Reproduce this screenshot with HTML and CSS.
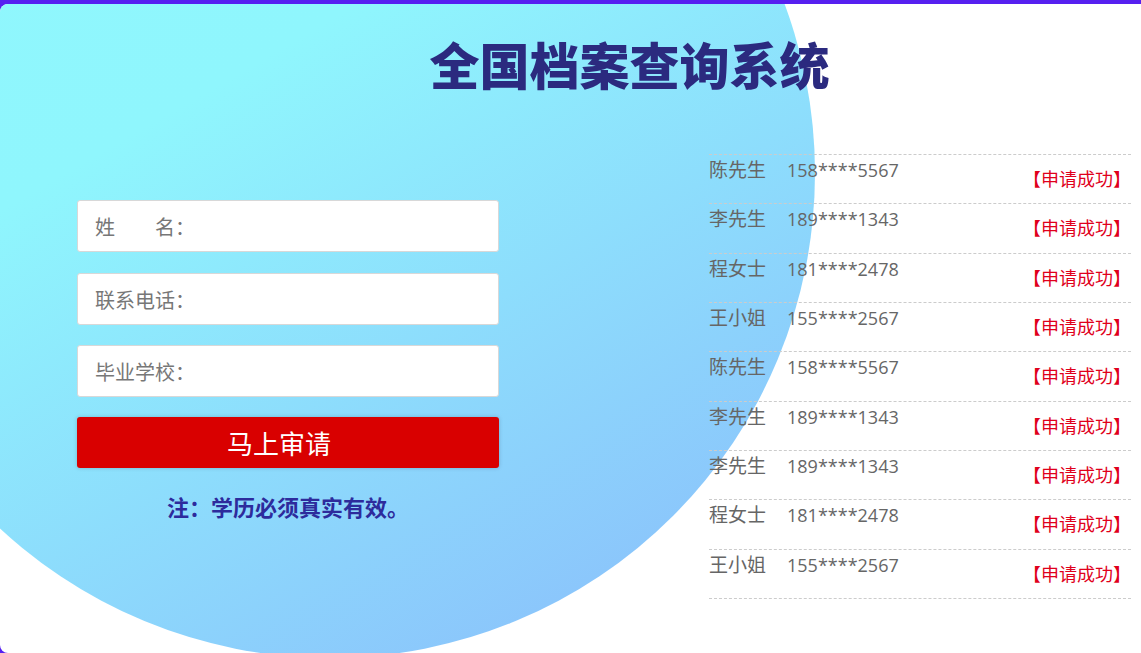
FILE: index.html
```html
<!DOCTYPE html>
<html lang="zh-CN">
<head>
<meta charset="utf-8">
<title>全国档案查询系统</title>
<link rel="stylesheet" href="styles.css">
</head>
<body>
<div class="panel">
  <div class="bubble"></div>
  <h1 class="title">全国档案查询系统</h1>
  <div class="main">
    <form class="form">
      <input class="field" type="text" placeholder="姓　　名：">
      <input class="field" type="text" placeholder="联系电话：">
      <input class="field" type="text" placeholder="毕业学校：">
      <button class="submit" type="button">马上审请</button>
      <p class="note">注：学历必须真实有效。</p>
    </form>
    <ul class="list">
      <li class="row"><span class="who"><span class="name">陈先生</span><span class="phone">158****5567</span></span><span class="status">【申请成功】</span></li>
      <li class="row"><span class="who"><span class="name">李先生</span><span class="phone">189****1343</span></span><span class="status">【申请成功】</span></li>
      <li class="row"><span class="who"><span class="name">程女士</span><span class="phone">181****2478</span></span><span class="status">【申请成功】</span></li>
      <li class="row"><span class="who"><span class="name">王小姐</span><span class="phone">155****2567</span></span><span class="status">【申请成功】</span></li>
      <li class="row"><span class="who"><span class="name">陈先生</span><span class="phone">158****5567</span></span><span class="status">【申请成功】</span></li>
      <li class="row"><span class="who"><span class="name">李先生</span><span class="phone">189****1343</span></span><span class="status">【申请成功】</span></li>
      <li class="row"><span class="who"><span class="name">李先生</span><span class="phone">189****1343</span></span><span class="status">【申请成功】</span></li>
      <li class="row"><span class="who"><span class="name">程女士</span><span class="phone">181****2478</span></span><span class="status">【申请成功】</span></li>
      <li class="row"><span class="who"><span class="name">王小姐</span><span class="phone">155****2567</span></span><span class="status">【申请成功】</span></li>
    </ul>
  </div>
</div>
</body>
</html>
```

FILE: styles.css
```css
html, body {
  margin: 0;
  padding: 0;
  height: 653px;
  overflow: hidden;
  background: #561ff0;
  font-family: "Noto Sans CJK SC", sans-serif;
}

.panel {
  position: relative;
  margin-top: 4px;
  height: 649px;
  background: #ffffff;
  border-radius: 8px 0 0 8px;
  overflow: hidden;
}

.bubble {
  position: absolute;
  left: -155px;
  top: -316px;
  width: 970px;
  height: 970px;
  border-radius: 50%;
  background: linear-gradient(150deg, #90f8fd 0%, #8ff6fd 40%, #8ab9fb 100%);
}

.title {
  position: relative;
  margin: 0;
  padding: 29px 0 0 118px;
  text-align: center;
  font-size: 50px;
  line-height: 60px;
  font-weight: 900;
  color: #2b2a7f;
}

.main {
  position: relative;
  display: flex;
  padding-top: 61px;
}

.form {
  display: flex;
  flex-direction: column;
  gap: 20px;
  width: 422px;
  margin: 0 0 0 77px;
  padding-top: 46px;
}

.field {
  box-sizing: border-box;
  height: 52px;
  width: 100%;
  margin: 0;
  padding: 0 17px;
  border: 1px solid #d8d8d8;
  border-radius: 3px;
  background: #ffffff;
  font-family: "Noto Sans CJK SC", sans-serif;
  font-size: 20px;
  color: #555555;
  outline: none;
}

.field:first-child {
  margin-bottom: 1px;
}

.field::placeholder {
  color: #777777;
}

.submit {
  height: 51px;
  width: 100%;
  margin: 0;
  padding: 0 18px 0 0;
  border: none;
  border-radius: 3px;
  background: #d90000;
  color: #ffffff;
  font-family: "Noto Sans CJK SC", sans-serif;
  font-size: 26px;
  box-shadow: 0 0 4px rgba(0, 0, 0, 0.18);
}

.note {
  margin: 3px 0 0;
  text-align: center;
  font-size: 22px;
  line-height: 30px;
  font-weight: 700;
  color: #2d2b9c;
}

.list {
  list-style: none;
  margin: 0 0 0 210px;
  padding: 0;
  width: 422px;
  border-bottom: 1px dashed #cccccc;
}

.row {
  box-sizing: border-box;
  height: 49.33px;
  display: flex;
  justify-content: space-between;
  align-items: flex-start;
  border-top: 1px dashed #cccccc;
  padding-top: 2px;
  font-size: 18px;
  line-height: 24px;
}

.who {
  color: #666666;
}

.name {
  font-size: 19px;
  margin-right: 21px;
}

.phone {
  font-family: "Open Sans", "Noto Sans CJK SC", sans-serif;
}

.status {
  margin-top: 9px;
  color: #e0001b;
}
```
